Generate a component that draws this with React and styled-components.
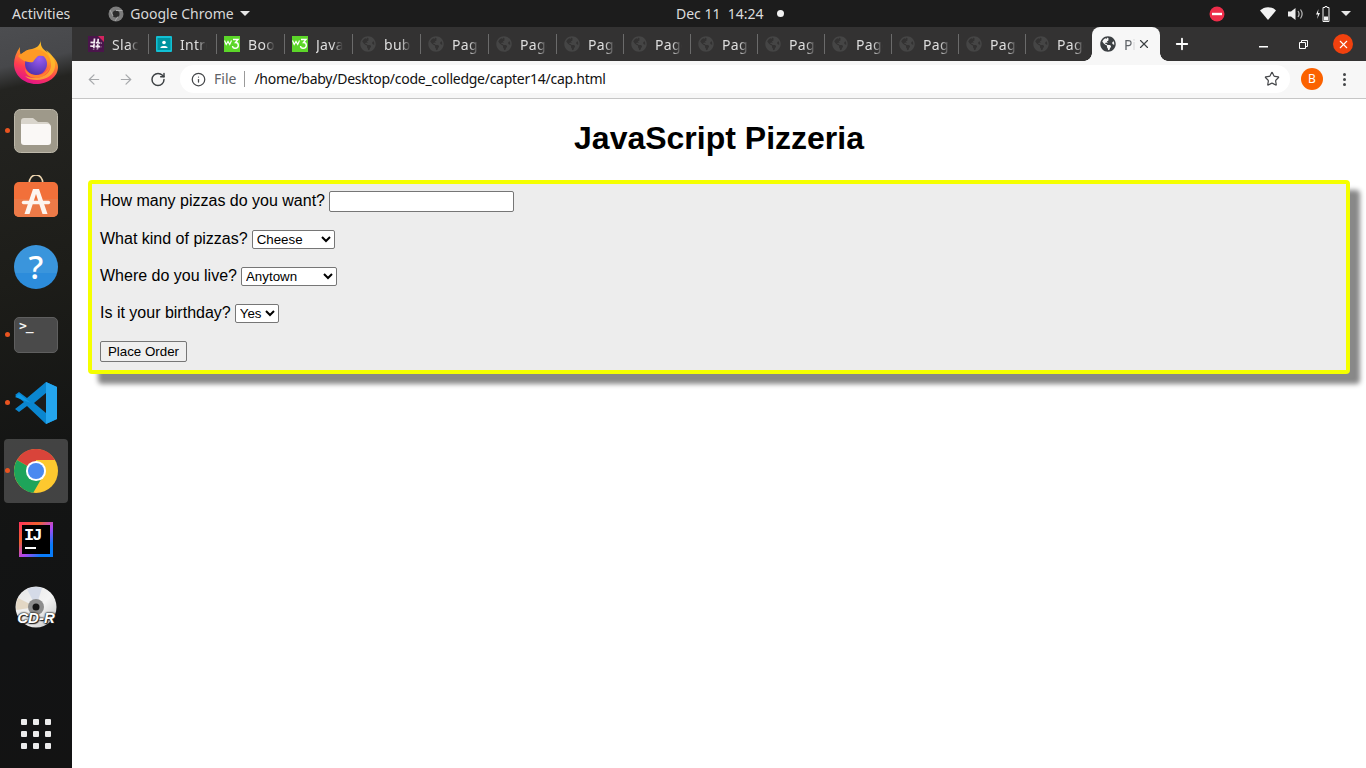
import React from "react";
import styled, { createGlobalStyle } from "styled-components";
import { ArrowLeft, ArrowRight, RotateCw, Star, Info, X, Plus } from "lucide-react";
import { FaGlobeAmericas } from "react-icons/fa";

const Global = createGlobalStyle`
  html, body { margin: 0; padding: 0; height: 768px; overflow: hidden; background: #fff; }
  #root { height: 768px; }
  * { box-sizing: border-box; }
`;

const Desktop = styled.div`
  display: flex; flex-direction: column; width: 1366px; height: 768px;
  font-family: "Noto Sans", sans-serif;
`;
const TopBar = styled.header`
  display: flex; align-items: center; height: 27px; flex: none; background: #1c1c1c;
  color: #dcdcdc; font-size: 14px; padding-left: 12px;
`;
const TopLeft = styled.div`display: flex; align-items: center; flex: 0 0 664px;`;
const AppMenu = styled.div`display: flex; align-items: center; gap: 6px; margin-left: 38px; color: #d8d8d8;`;
const Caret = styled.span`
  width: 0; height: 0; border-left: 5px solid transparent; border-right: 5px solid transparent;
  border-top: 5px solid #e6e6e6; display: inline-block; margin-left: ${p => p.$ml || 0}px;
`;
const Clock = styled.div`display: flex; align-items: center; gap: 13px; font-size: 14px;`;
const ClockDot = styled.span`width: 7px; height: 7px; border-radius: 50%; background: #f2f2f2;`;
const Tray = styled.div`display: flex; align-items: center; margin-left: auto; padding-right: 15px;`;
const TrayIcon = styled.svg`display: block; margin-left: ${p => p.$gap}px;`;

const Body = styled.div`display: flex; flex: 1; min-height: 0;`;
const Dock = styled.nav`
  width: 72px; flex: none; display: flex; flex-direction: column; align-items: center; padding-top: 2px;
  background: linear-gradient(167deg, #4c4d50 0, #47484b 40px, #242421 62px, #1d1d19 250px, #141514 420px, #121314 600px, #131313 100%);
`;
const DockItem = styled.div`
  position: relative; width: 64px; height: 64px; margin: 2px 0; flex: none;
  display: flex; align-items: center; justify-content: center;
  border-radius: 4px; background: ${p => (p.$active ? "rgba(255,255,255,.2)" : "transparent")};
  &::before {
    content: ""; display: ${p => (p.$running ? "block" : "none")};
    position: absolute; left: 1px; top: 29px; width: 5px; height: 5px; border-radius: 50%; background: #e95420;
  }
`;
const AppsGrid = styled.div`
  margin-top: auto; margin-bottom: 19px; display: grid; grid-template-columns: repeat(3, 6px); gap: 6px;
  span { width: 6px; height: 6px; border-radius: 1px; background: #ececec; }
`;
const HelpBadge = styled.div`
  width: 44px; height: 44px; border-radius: 50%; color: #fff; font: 500 33px/44px "Noto Sans", sans-serif; text-align: center;
  background: linear-gradient(180deg, #3a95dc 0 64%, #2c8cdb 64% 100%);
`;
const TermBadge = styled.div`
  width: 44px; height: 36px; border-radius: 5px; background: #4a4a4a; border: 1px solid #5f5f5f; color: #f4f4f4;
  font: 700 13px/14px "DejaVu Sans Mono", monospace; padding: 1px 0 0 4px; letter-spacing: -1px;
`;
const IdeaFrame = styled.div`
  width: 34px; height: 35px; padding: 3px;
  background: linear-gradient(135deg, #fe315d 0, #f0622e 30%, #b345f1 55%, #087cfa 80%);
`;
const IdeaInner = styled.div`
  width: 100%; height: 100%; background: #000; color: #fff; display: flex; flex-direction: column;
  font: 700 17px/16px "Liberation Mono", monospace; letter-spacing: -2px; padding: 3px 0 0 2px;
  &::after { content: ""; display: block; width: 11px; height: 2px; background: #fff; margin: 3px 0 0 1px; }
`;
const DiscWrap = styled.div`position: relative; width: 42px; height: 42px;`;
const DiscLabel = styled.span`
  position: absolute; left: 0; right: 0; top: 24px; text-align: center; color: #fff;
  font: italic 700 15px/15px "Liberation Sans", sans-serif;
  text-shadow: 0 0 2px #222, 0 0 2px #222, 0 0 1px #222, 1px 1px 1px #222;
`;
const FirefoxSvg = styled.svg`display: block; margin-top: -3px;`;
const StoreSvg = styled.svg`display: block; margin-top: -2px;`;

const Browser = styled.main`flex: 1; min-width: 0; display: flex; flex-direction: column;`;
const TabStrip = styled.div`
  height: 34px; flex: none; background: #333232; display: flex; align-items: stretch; padding-left: 8px; color: #dedede;
`;
const Tab = styled.div`
  position: relative; flex: 0 0 ${p => p.$w}px; display: flex; align-items: center; padding-left: 8px; gap: 8px; font-size: 14px;
  &::after {
    content: ""; display: ${p => (p.$sep ? "block" : "none")};
    position: absolute; right: -1px; top: 7px; width: 1px; height: 20px; background: #6b6b6b;
  }
`;
const TabIcon = styled.span`flex: none; width: 16px; height: 16px; display: flex; color: ${p => p.$c || "#454545"};`;
const TabTitle = styled.span`
  flex: none; width: 28px; overflow: hidden; white-space: nowrap; letter-spacing: .3px;
  -webkit-mask-image: linear-gradient(90deg, #000 60%, transparent 96%);
  mask-image: linear-gradient(90deg, #000 60%, transparent 96%);
`;
const ActiveTab = styled.div`
  position: relative; flex: 0 0 68px; display: flex; align-items: center; padding-left: 8px; color: #45474a;
  background: #f7f7f7; border-radius: 8px 8px 0 0; font-size: 14px;
  &::before, &::after {
    content: ""; position: absolute; bottom: 0; width: 8px; height: 8px;
    background: radial-gradient(circle at var(--x) 0, #333232 7.5px, #f7f7f7 8px);
  }
  &::before { left: -8px; --x: 0; }
  &::after { right: -8px; --x: 8px; }
`;
const ActiveTitle = styled.span`
  margin-left: 8px; width: 11px; overflow: hidden; color: #5f6368;
  -webkit-mask-image: linear-gradient(90deg, #000 60%, transparent 100%);
  mask-image: linear-gradient(90deg, #000 60%, transparent 100%);
`;
const TabClose = styled.span`display: flex; margin-left: 2px; color: #3c4043;`;
const NewTab = styled.div`display: flex; align-items: center; margin-left: 13px; color: #fff;`;
const WinControls = styled.div`display: flex; align-items: center; margin-left: auto; padding-right: 13px;`;
const WinButton = styled.div`
  width: 20px; height: 20px; margin-left: ${p => p.$gap}px; border-radius: 50%; display: flex; align-items: center; justify-content: center;
  background: ${p => (p.$close ? "#f1410e" : "transparent")}; color: #fff;
`;

const Toolbar = styled.div`
  height: 38px; flex: none; background: #f7f7f7; border-bottom: 1px solid #c6c6c6; display: flex; align-items: flex-start;
  padding: 4px 0 0 14px;
`;
const NavIcon = styled.span`
  width: 16px; height: 28px; margin-right: 16px; display: flex; align-items: center; justify-content: center; color: ${p => p.$c};
`;
const UrlPill = styled.div`
  width: 1110px; height: 28px; margin-left: -2px; background: #fff; border-radius: 14px; display: flex; align-items: center; padding: 0 10px 0 11px;
  font-size: 14px; color: #111;
`;
const FileChip = styled.span`
  color: #5f6368; margin-left: 8px; padding-right: 8px; border-right: 1px solid #9a9a9a; line-height: 16px; font-size: 14px;
`;
const UrlText = styled.span`margin-left: 9px; letter-spacing: -.26px; padding-bottom: 2px;`;
const StarBox = styled.span`display: flex; margin-left: auto; color: #45474a;`;
const Avatar = styled.div`
  width: 22px; height: 22px; border-radius: 50%; background: #fb6200; color: #fff; font-size: 12px; line-height: 22px; text-align: center;
  margin: 3px 0 0 11px;
`;
const Kebab = styled.div`
  margin: 8px 0 0 20px; display: grid; gap: 2px;
  span { width: 3px; height: 3px; border-radius: 50%; background: #45474a; }
`;

const Page = styled.section`flex: 1; background: #fff; padding: 0 16px; font-family: "Liberation Sans", Arial, sans-serif; color: #000; overflow: hidden;`;
const Title = styled.h1`font-size: 32px; line-height: 37px; font-weight: 700; text-align: center; margin: 21px 0 23px;`;
const OrderForm = styled.form`
  border: 4px solid #f5ff00; border-radius: 4px; background: #ededed; box-shadow: 10px 10px 5px #888;
  padding: 7px 8px 8px; height: 194px; font-size: 16px;
`;
const Row = styled.div`
  display: flex; align-items: baseline; gap: 4px; height: ${p => p.$h}px; margin-bottom: ${p => p.$mb}px;
`;
const TextInput = styled.input`
  width: 185px; height: 21px; border: 1px solid #767676; border-radius: 2px; background: #fff; padding: 1px 2px; margin: 0;
  font: 13.33px "Liberation Sans", sans-serif;
`;
const Dropdown = styled.select`
  width: ${p => p.$w}px; height: 19px; border: 1px solid #767676; border-radius: 2px; background: #fff; color: #000; margin: 0;
  font: 13.33px "Liberation Sans", sans-serif;
`;
const Submit = styled.button`
  width: 87px; height: 21px; border: 1px solid #767676; border-radius: 2px; background: #efefef; color: #000; padding: 0; margin: 0;
  font: 13.33px "Liberation Sans", sans-serif;
`;

const Firefox = () => (
  <FirefoxSvg width="44" height="44" viewBox="0 0 44 44">
    <defs>
      <linearGradient id="ffa" x1="0.8" y1="0" x2="0.4" y2="1">
        <stop offset="0" stopColor="#ffd52b" /><stop offset=".4" stopColor="#ff9a25" />
        <stop offset=".72" stopColor="#ff3d50" /><stop offset="1" stopColor="#e31587" />
      </linearGradient>
      <radialGradient id="ffb" cx=".65" cy=".25" r=".85">
        <stop offset="0" stopColor="#9a5cf0" /><stop offset="1" stopColor="#4a2fa8" />
      </radialGradient>
    </defs>
    <path d="M27 0c-1 5 1 9 6 12 6 4 11 9 11 15 0 10-10 17-22 17S0 35 0 24c0-6 2-11 6-17-.5 3 0 6 1 8 3-4 7-6 11-6 4-1 8-3 9-9z" fill="url(#ffa)" />
    <path d="M32 10c6 4 10 10 9 17-1 8-9 13-18 13-5 0-9-1-12-4 12 5 25 0 26-10 .3-6-2-11-5-16z" fill="#ffc02c" opacity=".75" />
    <circle cx="22" cy="24" r="11" fill="url(#ffb)" />
    <path d="M4 16c5-4 13-8 21-6 6 1 10 6 11 11-3-4-7-6-12-5-2 2-4 4-5 6-5 1-11-1-15-6z" fill="#ff9a25" />
    <path d="M11 29c4 6 13 8 19 4 3-2 6-5 6-9 0 8-6 14-14 14-6 0-11-4-11-9z" fill="#ff8a2a" opacity=".9" />
  </FirefoxSvg>
);
const Folder = () => (
  <svg width="44" height="44" viewBox="0 0 44 44">
    <rect x=".5" y=".5" width="43" height="43" rx="6" fill="#9e998a" stroke="#bdb8aa" />
    <path d="M7 12a3 3 0 0 1 3-3h9l5 4h8a4 4 0 0 1 4 4v3H7z" fill="#d9d5cc" />
    <path d="M7 15h27a3 3 0 0 1 3 3v15a3 3 0 0 1-3 3H10a3 3 0 0 1-3-3z" fill="#faf8f6" />
  </svg>
);
const StoreIcon = () => (
  <StoreSvg width="44" height="46" viewBox="0 -2 44 46">
    <path d="M15 7c0-12 14-12 14 0" fill="none" stroke="#eed6b0" strokeWidth="1.600" />
    <rect y="5" width="44" height="35" rx="5" fill="#f2703a" />
    <path d="M0 22h44v13a5 5 0 0 1-5 5H5a5 5 0 0 1-5-5z" fill="#ec7a48" />
    <path d="M19 12h6l8.500 25h-5L22 17l-6.500 20h-5z" fill="#fdf5f0" />
    <path d="M9.500 25.500h25" stroke="#fdf5f0" strokeWidth="3.400" strokeLinecap="round" />
  </StoreSvg>
);
const VSCode = () => (
  <svg width="44" height="44" viewBox="0 0 44 44">
    <path d="M32 1l11 5v32l-11 5-19-18-8 6-4-3 9-7-9-7 4-3 8 6z" fill="#0a86d0" />
    <path d="M32 1l11 5v32l-11 5z" fill="#24a5ee" />
    <path d="M32 12L20 22l12 10z" fill="#1c1c1c" />
    <path d="M1 16l4-3 8 6 4 3z" fill="#0e9ae8" />
  </svg>
);
const ChromeIcon = ({ size = 44 }) => (
  <svg width={size} height={size} viewBox="0 0 48 48">
    <circle cx="24" cy="24" r="24" fill="#fdc82f" />
    <path d="M24 24L3.2 12A24 24 0 0 1 44.8 12H24z" fill="#d9443a" />
    <path d="M3.2 12A24 24 0 0 0 21 47.800L33 27 24 24z" fill="#1ea45a" />
    <circle cx="24" cy="24" r="11" fill="#fff" />
    <circle cx="24" cy="24" r="8.800" fill="#4a89f0" />
  </svg>
);
const Disc = () => (
  <svg width="42" height="42" viewBox="0 0 42 42">
    <defs>
      <linearGradient id="cd" x1="0" y1="0" x2="1" y2="1">
        <stop offset="0" stopColor="#e4e4e4" /><stop offset=".55" stopColor="#f4f4f4" /><stop offset="1" stopColor="#bdbdbd" />
      </linearGradient>
    </defs>
    <circle cx="21" cy="21" r="20.500" fill="url(#cd)" />
    <path d="M21 21L3 12A20 20 0 0 0 1.500 24z" fill="#e3d7c4" />
    <path d="M21 21L12 3A20 20 0 0 1 27 2z" fill="#d5dbe8" />
    <circle cx="21" cy="21" r="8" fill="#8d8d8d" />
    <circle cx="21" cy="21" r="3.500" fill="#151515" />
  </svg>
);
const Slack = () => (
  <svg width="16" height="16" viewBox="0 0 16 16">
    <rect width="16" height="16" fill="#4a154b" />
    <path d="M10 0h6v6z" fill="#d3245e" />
    <path d="M6.500 2.500l-.8 11M10.200 2.800l-.8 11M2.500 6.300l11 .8M2.200 10l11 .8" stroke="#f4ecf2" strokeWidth="1.700" strokeDasharray="4.500 .8" />
  </svg>
);
const Classroom = () => (
  <svg width="16" height="16" viewBox="0 0 16 16">
    <rect width="16" height="16" rx="1" fill="#12c0d4" />
    <rect x="1.500" y="2" width="13" height="12" fill="#00939f" />
    <circle cx="8" cy="6.500" r="1.800" fill="#fff" />
    <path d="M4.500 11.500c0-2 7-2 7 0v.5h-7z" fill="#fff" />
  </svg>
);
const W3 = () => (
  <svg width="16" height="16" viewBox="0 0 16 16">
    <rect width="16" height="16" fill="#5cd629" />
    <path d="M.5 4.500l1.700 4L4 5.500l1.700 3 1.800-4" stroke="#fff" strokeWidth="1.200" fill="none" />
    <path d="M9 3.500h5l-2.500 3c2 0 2.800 1 2.800 2.700s-1.300 3.100-3.300 3.100-2.400-1.300-2.500-2.300" stroke="#fff" strokeWidth="1.400" fill="none" />
  </svg>
);
const NoEntry = () => (
  <TrayIcon $gap={0} width="16" height="16" viewBox="0 0 16 16">
    <circle cx="8" cy="8" r="7.500" fill="#ed2d4a" /><rect x="3" y="6.800" width="10" height="2.400" fill="#fff" />
  </TrayIcon>
);
const Wifi = () => (
  <TrayIcon $gap={35} width="16" height="13" viewBox="0 0 16 13"><path d="M0 3.500C4.500-1 11.500-1 16 3.500L8 13z" fill="#f2f2f2" /></TrayIcon>
);
const Volume = () => (
  <TrayIcon $gap={12} width="15" height="14" viewBox="0 0 15 14">
    <path d="M0 4.500h3L7.500 1v12L3 9.500H0z" fill="#eee" />
    <path d="M10 4c1.300 1.800 1.300 4.200 0 6M12.500 2.500c2 2.800 2 6.200 0 9" stroke="#bbb" strokeWidth="1.200" fill="none" />
  </TrayIcon>
);
const Battery = () => (
  <TrayIcon $gap={12} width="16" height="16" viewBox="0 0 16 16">
    <path d="M3.500 3L1 8.500h2L2 13l3-6H3z" fill="#f2f2f2" />
    <path d="M10 .5h2v1h2v14H8v-14h2z" fill="none" stroke="#f2f2f2" />
    <rect x="9" y="10.500" width="4" height="4" fill="#f2f2f2" />
  </TrayIcon>
);
const ChromeGlyph = () => (
  <svg width="16" height="16" viewBox="0 0 16 16">
    <circle cx="8" cy="8" r="7.500" fill="#7d7d7d" />
    <circle cx="8" cy="8" r="3.500" fill="#2b2b2b" />
    <path d="M8 4.500h6.500M5 10L2 4M10 10.500L7 15" stroke="#aaa" strokeWidth="1" />
  </svg>
);
const RestoreGlyph = () => (
  <svg width="9" height="9" viewBox="0 0 9 9">
    <path d="M2.500 2.500V.5h6v6h-2M.5 2.500h6v6h-6z" fill="none" stroke="#fff" strokeWidth="1" />
  </svg>
);
const MinimizeGlyph = () => (
  <svg width="9" height="10" viewBox="0 0 9 10"><rect y="7" width="9" height="1.500" fill="#fff" /></svg>
);

const Globe = () => <FaGlobeAmericas size={16} />;
const tabs = [
  { t: "Slack", i: <Slack />, w: 68 }, { t: "Introduction", i: <Classroom />, w: 68 },
  { t: "Booleans", i: <W3 />, w: 68 }, { t: "JavaScript", i: <W3 />, w: 68 }, { t: "bubble", i: <Globe />, w: 68 },
  { t: "Page", i: <Globe />, w: 68 }, { t: "Page", i: <Globe />, w: 68 },
  ...Array.from({ length: 8 }, () => ({ t: "Page", i: <Globe />, w: 67 })),
];
const apps = Array.from({ length: 9 }, (_, i) => i);

export default function App() {
  return (
    <Desktop>
      <Global />
      <TopBar>
        <TopLeft>
          <span>Activities</span>
          <AppMenu>
            <ChromeGlyph />
            <span>Google Chrome</span>
            <Caret />
          </AppMenu>
        </TopLeft>
        <Clock><span>Dec 11 &nbsp;14:24</span><ClockDot /></Clock>
        <Tray>
          <NoEntry /><Wifi /><Volume /><Battery />
          <Caret $ml={10} />
        </Tray>
      </TopBar>
      <Body>
        <Dock>
          <DockItem><Firefox /></DockItem>
          <DockItem $running><Folder /></DockItem>
          <DockItem><StoreIcon /></DockItem>
          <DockItem><HelpBadge>?</HelpBadge></DockItem>
          <DockItem $running><TermBadge>&gt;_</TermBadge></DockItem>
          <DockItem $running><VSCode /></DockItem>
          <DockItem $running $active><ChromeIcon /></DockItem>
          <DockItem><IdeaFrame><IdeaInner>IJ</IdeaInner></IdeaFrame></DockItem>
          <DockItem><DiscWrap><Disc /><DiscLabel>CD-R</DiscLabel></DiscWrap></DockItem>
          <AppsGrid>{apps.map(a => <span key={a} />)}</AppsGrid>
        </Dock>
        <Browser>
          <TabStrip>
            {tabs.map((tab, i) => (
              <Tab key={i} $w={tab.w} $sep={i < tabs.length - 1}>
                <TabIcon>{tab.i}</TabIcon>
                <TabTitle>{tab.t}</TabTitle>
              </Tab>
            ))}
            <ActiveTab>
              <TabIcon $c="#3c4043"><Globe /></TabIcon>
              <ActiveTitle>Pizzeria</ActiveTitle>
              <TabClose><X size={14} strokeWidth={2} /></TabClose>
            </ActiveTab>
            <NewTab><Plus size={18} strokeWidth={2.4} /></NewTab>
            <WinControls>
              <WinButton><MinimizeGlyph /></WinButton>
              <WinButton $gap={20}><RestoreGlyph /></WinButton>
              <WinButton $gap={20} $close><X size={13} strokeWidth={2} /></WinButton>
            </WinControls>
          </TabStrip>
          <Toolbar>
            <NavIcon $c="#a7a9ac"><ArrowLeft size={21} strokeWidth={1.8} /></NavIcon>
            <NavIcon $c="#a7a9ac"><ArrowRight size={21} strokeWidth={1.8} /></NavIcon>
            <NavIcon $c="#3c4043"><RotateCw size={17} strokeWidth={2.2} /></NavIcon>
            <UrlPill>
              <Info size={15} color="#45474a" strokeWidth={2} />
              <FileChip>File</FileChip>
              <UrlText>/home/baby/Desktop/code_colledge/capter14/cap.html</UrlText>
              <StarBox><Star size={16} strokeWidth={1.8} /></StarBox>
            </UrlPill>
            <Avatar>B</Avatar>
            <Kebab><span /><span /><span /></Kebab>
          </Toolbar>
          <Page>
            <Title>JavaScript Pizzeria</Title>
            <OrderForm onSubmit={e => e.preventDefault()}>
              <Row $h={21} $mb={18}>How many pizzas do you want? <TextInput type="text" /></Row>
              <Row $h={19} $mb={18}>What kind of pizzas?
                <Dropdown $w={83}><option>Cheese</option><option>Pepperoni</option></Dropdown>
              </Row>
              <Row $h={19} $mb={18}>Where do you live?
                <Dropdown $w={96}><option>Anytown</option><option>Other</option></Dropdown>
              </Row>
              <Row $h={19} $mb={18}>Is it your birthday?
                <Dropdown $w={44}><option>Yes</option><option>No</option></Dropdown>
              </Row>
              <Row $h={21} $mb={0}><Submit type="submit">Place Order</Submit></Row>
            </OrderForm>
          </Page>
        </Browser>
      </Body>
    </Desktop>
  );
}
